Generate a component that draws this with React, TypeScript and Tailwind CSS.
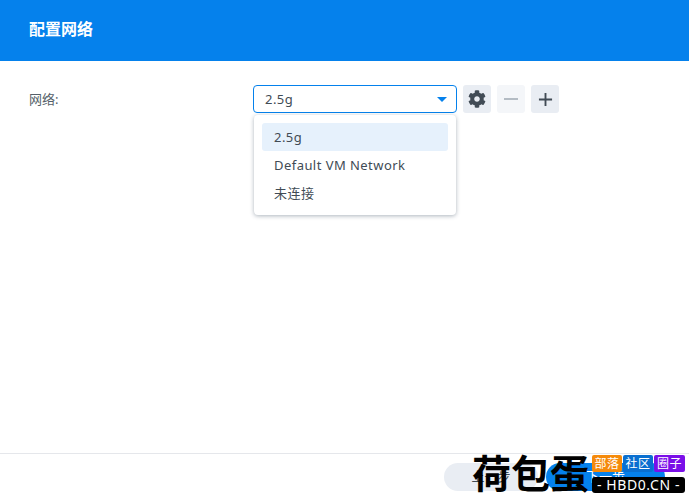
import { FaCog } from "react-icons/fa"

const cjk = "font-['Noto_Sans','Noto_Sans_CJK_SC',sans-serif]"

const IconButton = ({ children, dim }: { children: React.ReactNode, dim?: boolean }) => (
  <div className={`flex h-[28px] w-[28px] items-center justify-center rounded-[3px] ${dim ? "bg-[#f4f6f9]" : "bg-[#e9edf3]"}`}>
    {children}
  </div>
)

const options = ["2.5g", "Default VM Network", "未连接"]

export default function App() {
  return (
    <div className={`relative flex h-[499px] w-[689px] flex-col overflow-hidden bg-white ${cjk} text-[13px] text-[#414b55]`}>
      <header className="flex h-[61px] items-center bg-[#0581ec] pb-[3px] pl-[29px]">
        <h1 className="text-[16px] font-bold leading-none text-white">配置网络</h1>
      </header>

      <main className="flex flex-1 items-start pl-[29px] pt-[24px]">
        <label className="flex h-[28px] w-[224px] items-center pt-[1px] text-[13px] text-[#555f69]">网络:</label>
        <div className="flex flex-col gap-[2px]">
          <div className="flex items-center gap-[6px]">
            <div className="flex h-[28px] w-[204px] items-center justify-between rounded-[4px] border border-[#0581ec] pl-[11px] pr-[9px] tracking-[0.45px]">
              <span className="pt-[1px]">2.5g</span>
              <span className="h-0 w-0 border-x-[5px] border-t-[5px] border-x-transparent border-t-[#0581ec]" />
            </div>
            <IconButton><FaCog size={18} color="#414b55" /></IconButton>
            <IconButton dim><span className="h-[2px] w-[14px] bg-[#b4bcc4]" /></IconButton>
            <IconButton>
              <svg viewBox="0 0 16 16" className="h-[15px] w-[15px]" fill="#414b55"><path d="M7 1h2v6h6v2H9v6H7V9H1V7h6z" /></svg>
            </IconButton>
          </div>
          <ul className="ml-[1px] w-[202px] rounded-[4px] bg-white px-[8px] py-[8px] shadow-[0_1px_4px_rgba(50,70,90,0.4)]">
            {options.map((o, i) => (
              <li key={o} className={`flex h-[28px] items-center rounded-[3px] pl-[12px] pt-[2px] tracking-[0.45px] ${i === 0 ? "bg-[#e6f1fc]" : ""}`}>{o}</li>
            ))}
          </ul>
        </div>
      </main>

      <footer className="flex h-[46px] shrink-0 items-start justify-end gap-[8px] border-t border-[#e5e7eb] pr-[24px] pt-[9px]">
        <button className="h-[28px] w-[94px] rounded-full bg-[#e9edf3] text-[13px]">上一步</button>
        <button className="h-[28px] w-[119px] rounded-full bg-[#0581ec] text-[13px] text-white">下一步</button>
      </footer>

      {/* forum watermark */}
      <div className="absolute bottom-[6px] right-[4px] flex items-end gap-[3px]">
        <span className="text-[39px] font-semibold leading-[40px] text-black">荷包蛋</span>
        <div className="flex flex-col gap-[5px]">
          <div className="flex gap-[1px] text-[12px] leading-[17px] tracking-[0.5px] text-white">
            <span className="w-[30px] rounded-[2px] bg-[#f58a0b] text-center">部落</span>
            <span className="w-[30px] rounded-[2px] bg-[#0a6fd0] text-center">社区</span>
            <span className="w-[31px] rounded-[2px] bg-[#7a0fe8] text-center">圈子</span>
          </div>
          <div className="rounded-[3px] bg-black text-center text-[14px] leading-[16px] tracking-[0.6px] text-white">- HBD0.CN -</div>
        </div>
      </div>
    </div>
  )
}
